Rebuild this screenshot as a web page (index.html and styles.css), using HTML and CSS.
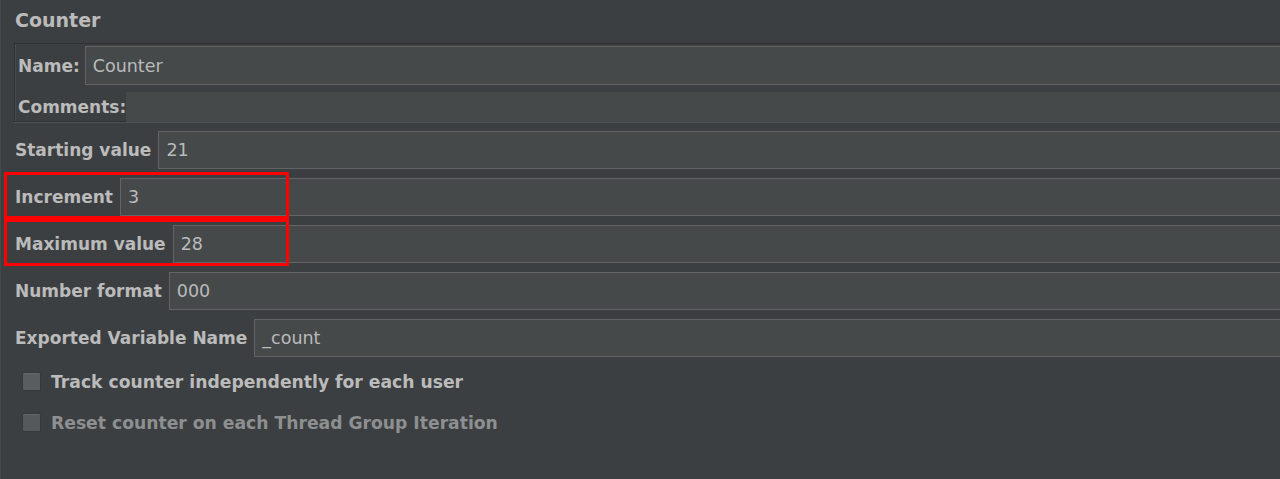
FILE: index.html
```html
<!DOCTYPE html>
<html>
<head>
<meta charset="utf-8">
<link rel="stylesheet" href="styles.css">
</head>
<body>
<div class="page">
  <div class="title">Counter</div>
  <div class="namepanel">
    <div class="nrow">
      <label class="lbl">Name:</label>
      <div class="field name-field">Counter</div>
    </div>
    <div class="crow">
      <label class="lbl">Comments:</label>
      <div class="comments"></div>
    </div>
  </div>
  <div class="rows">
    <div class="row"><label class="lbl">Starting value</label><div class="field">21</div></div>
    <div class="row hl"><label class="lbl">Increment</label><div class="field">3</div></div>
    <div class="row hl"><label class="lbl">Maximum value</label><div class="field">28</div></div>
    <div class="row"><label class="lbl">Number format</label><div class="field">000</div></div>
    <div class="row"><label class="lbl">Exported Variable Name</label><div class="field">_count</div></div>
  </div>
  <div class="checks">
    <div class="check"><span class="box"></span><span class="ctext">Track counter independently for each user</span></div>
    <div class="check disabled"><span class="box"></span><span class="ctext">Reset counter on each Thread Group Iteration</span></div>
  </div>
</div>
</body>
</html>
```

FILE: styles.css
```css
html, body {
  margin: 0;
  padding: 0;
  background: #3c3f41;
  overflow: hidden;
  width: 1280px;
  height: 479px;
}
.page {
  position: relative;
  width: 1300px;
  height: 479px;
  border-left: 1px solid #46494b;
  box-sizing: border-box;
  font-family: "DejaVu Sans", sans-serif;
  color: #bbbbbb;
}
.title {
  font-weight: bold;
  font-size: 19px;
  height: 43px;
  line-height: 40px;
  padding-left: 14px;
  box-sizing: border-box;
}
.namepanel {
  margin-left: 13px;
  border: 1px solid #2f3133;
  box-shadow: 0 1px 0 #4e5254, inset 1px 0 0 #4a4d4f;
  padding: 2px 0 0 3px;
  height: 79px;
  box-sizing: border-box;
}
.lbl {
  font-weight: bold;
  font-size: 17px;
  white-space: nowrap;
}
.field {
  flex: 1;
  height: 38px;
  box-sizing: border-box;
  background: #45494a;
  border: 1px solid #646464;
  font-size: 17.5px;
  display: flex;
  align-items: center;
  padding-left: 7px;
  color: #bbbbbb;
}
.nrow {
  display: flex;
  align-items: center;
  gap: 5px;
}
.nrow .field {
  height: 39px;
}
.crow {
  display: flex;
  align-items: center;
  margin-top: 7px;
}
.comments {
  flex: 1;
  height: 30px;
  background: #45494a;
}
.rows {
  margin-top: 9px;
  padding-left: 14px;
  display: flex;
  flex-direction: column;
  gap: 9px;
}
.row {
  position: relative;
  display: flex;
  align-items: center;
  gap: 7px;
}
.row.hl::after {
  content: "";
  position: absolute;
  left: -11px;
  top: -6px;
  width: 285px;
  height: 47px;
  border: 3px solid #ff0000;
  box-sizing: border-box;
  pointer-events: none;
}
.checks {
  margin-top: 15px;
  padding-left: 21px;
  display: flex;
  flex-direction: column;
  gap: 22px;
}
.check {
  display: flex;
  align-items: center;
  gap: 10px;
  height: 19px;
}
.box {
  width: 19px;
  height: 19px;
  box-sizing: border-box;
  background: #5a5d5f;
  border: 1px solid #36393a;
  border-radius: 2px;
  box-shadow: inset 0 1px 0 #64686a;
}
.ctext {
  font-weight: bold;
  font-size: 17.2px;
  color: #bbbbbb;
}
.check.disabled .ctext {
  color: #8d8f90;
}
.check.disabled .box {
  background: #56595b;
}
```
